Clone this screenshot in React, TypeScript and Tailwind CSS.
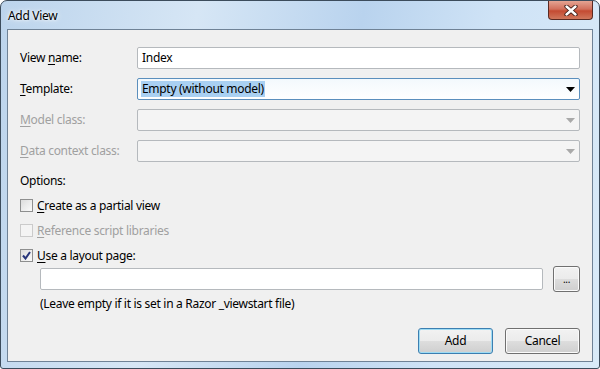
import React from "react";

const font = { fontFamily: '"Noto Sans", "Open Sans", sans-serif' };

function U({ children }: { children: React.ReactNode }) {
  return <span className="underline underline-offset-2 decoration-1">{children}</span>;
}

function Arrow({ disabled }: { disabled?: boolean }) {
  return (
    <svg width="9" height="5" viewBox="0 0 9 5" className="shrink-0">
      <path d="M0 0 H9 L4.5 5 Z" fill={disabled ? "#a9a9a9" : "#000"} />
    </svg>
  );
}

function Combo({ value, focused, disabled }: { value?: string; focused?: boolean; disabled?: boolean }) {
  const border = focused ? "border-[#5b8fbd]" : "border-[#b5b9bd]";
  const bg = disabled ? "bg-[#f4f4f4]" : "bg-gradient-to-b from-[#f3f9fd] to-white";
  return (
    <div className={`flex-1 h-[22px] flex items-center justify-between border ${border} ${bg} rounded-[2px] pl-[3px] pr-[4px]`}>
      {value ? <span className="bg-[#a9d0f2] px-[1px] leading-[16px] text-black">{value}</span> : <span />}
      <Arrow disabled={disabled} />
    </div>
  );
}

function Checkbox({ checked, disabled }: { checked?: boolean; disabled?: boolean }) {
  return (
    <div
      className={`w-[13px] h-[13px] border ${disabled ? "border-[#cbcbcb] bg-[#f4f4f4]" : "border-[#8e8f8f] bg-gradient-to-br from-[#dcdcdc] to-[#fbfbfb]"} flex items-center justify-center shrink-0`}
    >
      {checked && (
        <svg width="9" height="9" viewBox="0 0 9 9">
          <path d="M1 4.5 L3.5 7.5 L8 1" stroke="#27357a" strokeWidth="2" fill="none" />
        </svg>
      )}
    </div>
  );
}

function Button({ children, primary, className = "" }: { children: React.ReactNode; primary?: boolean; className?: string }) {
  return (
    <div
      className={`h-[26px] flex items-center justify-center rounded-[3px] border ${primary ? "border-[#3c7fb1] shadow-[inset_0_0_0_1px_#9fdcf4]" : "border-[#707070] shadow-[inset_0_0_0_1px_#fbfbfb]"} bg-[linear-gradient(to_bottom,#f2f2f2_0%,#ebebeb_50%,#dddddd_51%,#cfcfcf_100%)] text-black ${className}`}
    >
      {children}
    </div>
  );
}

export default function App() {
  return (
    <div
      className="w-[600px] h-[369px] flex flex-col rounded-t-[7px] rounded-b-[3px] border border-[#3c4c5c] bg-[linear-gradient(100deg,#bcd4ec_0%,#d6e6f5_30%,#b9d3ee_55%,#cfe3f6_75%,#d9eaf8_100%)] text-[12px] tracking-[-0.3px] overflow-hidden"
      style={font}
    >
      <div className="h-[28px] flex items-start justify-between shrink-0">
        <div className="pl-[7px] pt-[6px] text-black [text-shadow:0_0_6px_#fff,0_0_3px_#fff]">Add View</div>
        <div className="mr-[6px] w-[45px] h-[19px] rounded-b-[4px] border border-t-0 border-[#5a2a22] bg-[linear-gradient(to_bottom,#e5a493_0%,#d2705c_45%,#c44b32_55%,#d0775c_100%)] flex items-center justify-center">
          <svg width="14" height="11" viewBox="0 0 14 11">
            <path d="M2.5 1.5 L11.5 9.5 M11.5 1.5 L2.5 9.5" stroke="#3a1a14" strokeWidth="4.2" strokeLinecap="round" />
            <path d="M2.5 1.5 L11.5 9.5 M11.5 1.5 L2.5 9.5" stroke="#fff" strokeWidth="2.4" strokeLinecap="round" />
          </svg>
        </div>
      </div>
      <div className="flex-1 mx-[6px] mb-[6px] border border-[#6f8296] bg-[#f0f0f0] flex flex-col pl-[12px] pr-[12px] pt-[17px] text-black">
        <div className="flex flex-col gap-[9px]">
          <div className="flex items-center">
            <div className="w-[117px]">View <U>n</U>ame:</div>
            <div className="flex-1 h-[22px] flex items-center border border-[#b5b9bd] bg-white rounded-[2px] pl-[4px]">Index</div>
          </div>
          <div className="flex items-center">
            <div className="w-[117px]"><U>T</U>emplate:</div>
            <Combo value="Empty (without model)" focused />
          </div>
          <div className="flex items-center text-[#a0a0a0]">
            <div className="w-[117px]"><U>M</U>odel class:</div>
            <Combo disabled />
          </div>
          <div className="flex items-center text-[#a0a0a0]">
            <div className="w-[117px]"><U>D</U>ata context class:</div>
            <Combo disabled />
          </div>
        </div>
        <div className="mt-[10px] leading-[17px]">Options:</div>
        <div className="mt-[8px] flex items-center gap-[4px] leading-[17px]">
          <Checkbox />
          <span><U>C</U>reate as a partial view</span>
        </div>
        <div className="mt-[8px] flex items-center gap-[4px] leading-[17px] text-[#a0a0a0]">
          <Checkbox disabled />
          <span><U>R</U>eference script libraries</span>
        </div>
        <div className="mt-[8px] flex items-center gap-[4px] leading-[17px]">
          <Checkbox checked />
          <span><U>U</U>se a layout page:</span>
        </div>
        <div className="mt-[2px] pl-[20px] flex items-center gap-[10px]">
          <div className="flex-1 h-[22px] border border-[#b5b9bd] bg-white rounded-[2px]" />
          <Button className="w-[27px] h-[22px] text-[10px]">...</Button>
        </div>
        <div className="mt-[3px] pl-[20px] leading-[17px]">(Leave empty if it is set in a Razor _viewstart file)</div>
        <div className="mt-[16px] flex justify-end gap-[12px]">
          <Button primary className="w-[75px]">Add</Button>
          <Button className="w-[75px]">Cancel</Button>
        </div>
      </div>
    </div>
  );
}
